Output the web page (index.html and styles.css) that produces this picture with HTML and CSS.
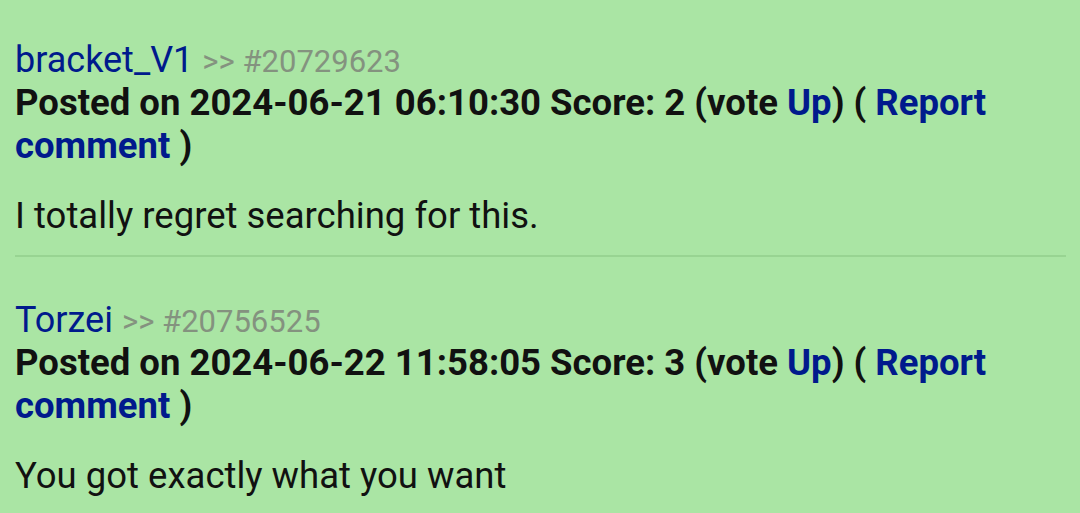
FILE: index.html
```html
<!DOCTYPE html>
<html lang="en">
<head>
  <meta charset="UTF-8" />
  <title>Comments</title>
  <link rel="stylesheet" href="styles.css">
</head>
<body>

  <div class="comments">
    <!-- Comment 1 -->
    <div class="comment">
      <div class="author">
        <a href="#" class="user">bracket_V1</a>
        <span class="cid">&gt;&gt; #20729623</span>
      </div>
      <div class="meta">
        Posted on 2024-06-21 06:10:30 Score: 2 (vote <a href="#">Up</a>) ( <a href="#">Report comment</a> )
      </div>
      <div class="body">I totally regret searching for this.</div>
    </div>

    <hr class="sep" />

    <!-- Comment 2 -->
    <div class="comment">
      <div class="author">
        <a href="#" class="user">Torzei</a>
        <span class="cid">&gt;&gt; #20756525</span>
      </div>
      <div class="meta">
        Posted on 2024-06-22 11:58:05 Score: 3 (vote <a href="#">Up</a>) ( <a href="#">Report comment</a> )
      </div>
      <div class="body">You got exactly what you want</div>
    </div>
  </div>

</body>
</html>
```

FILE: styles.css
```css
* {
  box-sizing: border-box;
  font-family: Roboto, 'Liberation Sans', sans-serif;
}

body {
  margin: 0;
  background-color: #aae5a4;
  color: #111;
}

.comments {
  padding: 38px 14px 0 15px;
  font-size: 36.5px;
  line-height: 43px;
}

a {
  color: #001a8c;
  text-decoration: none;
}

.author {
  height: 43px;
}

.author .user {
  font-weight: 400;
  font-size: 36px;
  line-height: 1;
}

.cid {
  color: #84927f;
  font-size: 31px;
  line-height: 1;
}

.meta {
  font-weight: 700;
}

.body {
  margin-top: 27px;
}

.sep {
  border: none;
  height: 2px;
  background-color: #98d492;
  margin: 18px 0 41px 0;
}
```
